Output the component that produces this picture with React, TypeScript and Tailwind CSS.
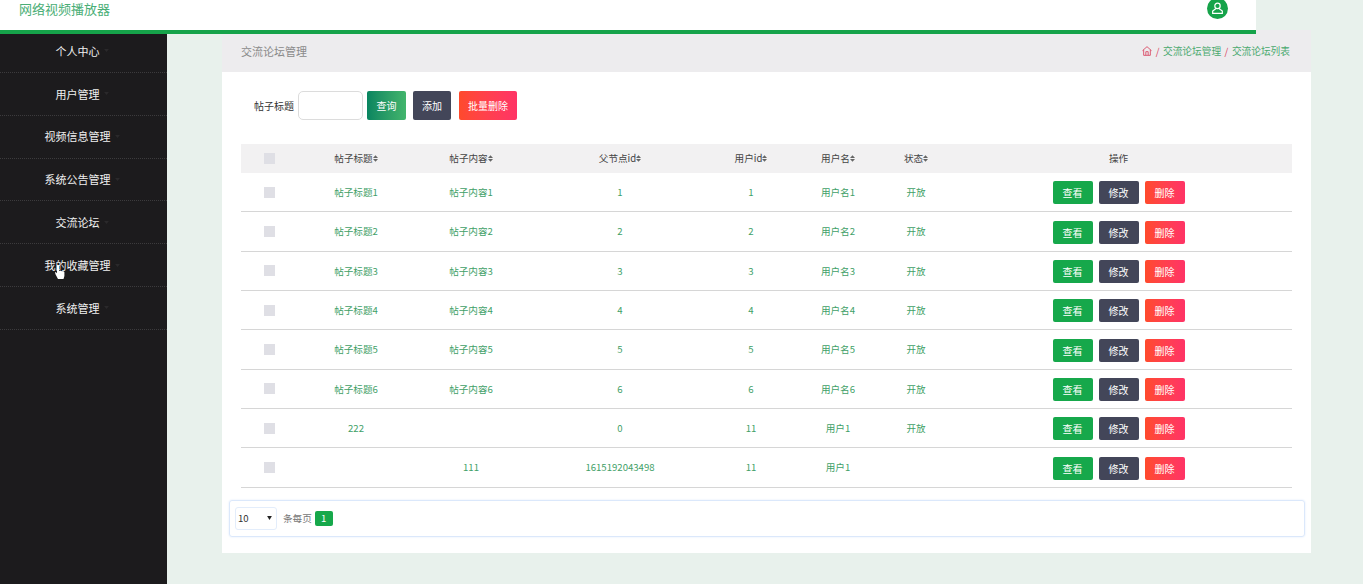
const NAV_ITEMS = ["个人中心", "用户管理", "视频信息管理", "系统公告管理", "交流论坛", "我的收藏管理", "系统管理"]

const COLUMNS = ["帖子标题", "帖子内容", "父节点id", "用户id", "用户名", "状态"]

const ROWS = [
  ["帖子标题1", "帖子内容1", "1", "1", "用户名1", "开放"],
  ["帖子标题2", "帖子内容2", "2", "2", "用户名2", "开放"],
  ["帖子标题3", "帖子内容3", "3", "3", "用户名3", "开放"],
  ["帖子标题4", "帖子内容4", "4", "4", "用户名4", "开放"],
  ["帖子标题5", "帖子内容5", "5", "5", "用户名5", "开放"],
  ["帖子标题6", "帖子内容6", "6", "6", "用户名6", "开放"],
  ["222", "", "0", "11", "用户1", "开放"],
  ["", "111", "1615192043498", "11", "用户1", ""],
]

const GRID = "grid grid-cols-[56px_118px_112px_186px_76px_98px_58px_1fr] items-center text-center"

function SortIcon() {
  return (
    <svg viewBox="0 0 6 8" className="inline-block h-[7px] w-[5px] fill-[#666]">
      <path d="M3 0 6 3.4H0zM3 8 0 4.6h6z" />
    </svg>
  )
}

function Checkbox() {
  return <div className="ml-[23px] h-[11px] w-[11px] bg-[#dfdfe5]" />
}

function HomeIcon() {
  return (
    <svg viewBox="0 0 12 12" className="h-[10px] w-[10px] fill-none stroke-[#d8405c]" strokeWidth="1">
      <path d="M.6 5.6 6 .8l5.4 4.8" />
      <path d="M2 4.6v6.6h8V4.6" />
      <path d="M4.6 11V6.8h2.8V11" />
    </svg>
  )
}

function UserIcon() {
  return (
    <svg viewBox="0 0 14 14" className="h-[13px] w-[13px] fill-none stroke-white" strokeWidth="1.3">
      <circle cx="7" cy="4.2" r="2.9" />
      <path d="M5.4 7 1.8 9.8v2.4h10.4V9.8L8.6 7" />
    </svg>
  )
}

function HandCursor() {
  return (
    <svg viewBox="0 0 10 14" className="absolute left-[55px] top-[265px] h-[14px] w-[10px] fill-white">
      <path d="M2 1.1a1 1 0 0 1 2 0V6l1.1-.4 1 .3 1 .3 1-.1 1.3.9V11l-.9 3H3L.6 9.4 0 7.6l.7-.6L2 8.2z" />
    </svg>
  )
}

export default function App() {
  return (
    <div
      className="relative flex h-[584px] w-[1363px] flex-col overflow-hidden bg-[#e8f1ec] text-[9.6px]"
      style={{ fontFamily: '"Noto Sans CJK SC", sans-serif' }}
    >
      <header className="relative z-10 flex h-[34px] w-[1256px] shrink-0 justify-between border-b-4 border-[#16a34a] bg-white pl-[19px] pr-[28px]">
        <span className="text-[13px] leading-[18px] text-[#4aae76]">网络视频播放器</span>
        <div className="-mt-[2px] flex h-[21px] w-[21px] items-center justify-center rounded-full bg-[#16a34a]">
          <UserIcon />
        </div>
      </header>

      <div className="-mt-[4px] flex min-h-0 flex-1">
        <aside className="w-[167px] shrink-0 bg-[#1c1b1d]">
          {NAV_ITEMS.map((item) => (
            <div
              key={item}
              className="flex h-[42.85px] items-center justify-center border-b border-dotted border-[#3c3b3d] text-[11px] text-[#f0f0f0]"
            >
              <span>{item}</span>
              <svg viewBox="0 0 8 5" className="ml-[4px] h-[3px] w-[5px] fill-[#2a292b]">
                <path d="M0 0h8L4 5z" />
              </svg>
              <span className="w-[3px]" />
            </div>
          ))}
        </aside>

        <main className="ml-[55px] mb-[31px] flex w-[1089px] flex-col bg-white">
          <div className="flex h-[42px] shrink-0 items-center justify-between bg-[#edecee] pl-[19px] pr-[21px]">
            <span className="text-[11px] text-[#8a8a8a]">交流论坛管理</span>
            <div className="flex items-center gap-[3.5px] text-[#4aa96f]">
              <HomeIcon />
              <span className="text-[#d8405c]">/</span>
              <span className="text-[9.7px]">交流论坛管理</span>
              <span className="text-[#d8405c]">/</span>
              <span className="text-[9.7px]">交流论坛列表</span>
            </div>
          </div>

          <div className="mt-[19px] flex h-[29px] items-center pl-[32px] text-[10px]">
            <span className="pb-[1px] text-[#333]">帖子标题</span>
            <input className="ml-[4px] h-[29px] w-[65px] rounded-[5px] border border-[#dcdcdc] bg-white" />
            <button className="ml-[4px] h-[29px] w-[39px] rounded-[2px] bg-gradient-to-r from-[#078560] to-[#42b56c] pb-[1px] text-white">查询</button>
            <button className="ml-[7px] h-[29px] w-[38px] rounded-[2px] bg-[#434659] pb-[1px] text-white">添加</button>
            <button className="ml-[8px] h-[29px] w-[58px] rounded-[2px] bg-gradient-to-r from-[#ff4a2b] to-[#ff3366] pb-[1px] text-white">批量删除</button>
          </div>

          <div className="ml-[19px] mt-[24px] w-[1051px]">
            <div className={`${GRID} h-[29px] bg-[#f2f1f2] text-[#444]`}>
              <Checkbox />
              {COLUMNS.map((col) => (
                <div key={col} className="flex items-center justify-center">
                  {col}
                  <SortIcon />
                </div>
              ))}
              <div>操作</div>
            </div>

            {ROWS.map((row, i) => (
              <div key={i} className={`${GRID} h-[39.35px] border-b border-[#d6d6d6] text-[#3f9f68]`}>
                <Checkbox />
                {row.map((cell, j) => (
                  <div key={j}>{cell}</div>
                ))}
                <div className="flex justify-center gap-[6px] pt-[1px] text-[10px]">
                  <button className="h-[23px] w-[40px] rounded-[2px] bg-[#16a84b] text-white">查看</button>
                  <button className="h-[23px] w-[40px] rounded-[2px] bg-[#434659] text-white">修改</button>
                  <button className="h-[23px] w-[40px] rounded-[2px] bg-gradient-to-r from-[#ff4a2b] to-[#ff3366] text-white">删除</button>
                </div>
              </div>
            ))}
          </div>

          <div className="ml-[6.5px] mt-[12px] flex h-[37px] w-[1076.5px] items-center rounded-[3px] border border-[#dbe8fb] pl-[5.5px] shadow-[0_0_2px_#dbe8fb]">
            <div className="flex h-[23px] w-[42px] items-center justify-between rounded-[3px] border border-[#e3edfb] pl-[2px] pr-[4px] text-[#333]">
              <span>10</span>
              <svg viewBox="0 0 6 5" className="h-[4px] w-[5px] fill-[#222]">
                <path d="M0 0h6L3 5z" />
              </svg>
            </div>
            <span className="ml-[6px] text-[#777]">条每页</span>
            <span className="ml-[3px] flex h-[15px] w-[18px] items-center justify-center rounded-[2px] bg-[#16a84b] text-white">1</span>
          </div>
        </main>
      </div>

      <HandCursor />
    </div>
  )
}
